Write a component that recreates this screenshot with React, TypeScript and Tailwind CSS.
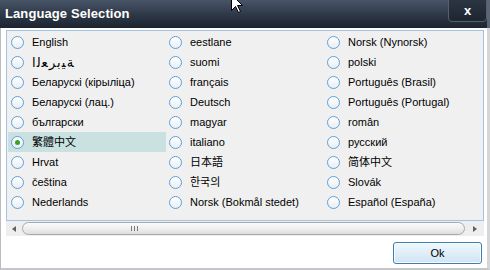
import React from "react";

const ARABIC = "ARABIC";
const arabicGlyphs = ["\uFE8D", "\uFEDF", "\uFECC", "\uFEAE", "\uFE91", "\uFEF4", "\uFE94"];

const cols: string[][] = [
  [
    "English",
    ARABIC,
    "Беларускі (кірыліца)",
    "Беларускі (лац.)",
    "български",
    "繁體中文",
    "Hrvat",
    "čeština",
    "Nederlands",
  ],
  [
    "eestlane",
    "suomi",
    "français",
    "Deutsch",
    "magyar",
    "italiano",
    "日本語",
    "한국의",
    "Norsk (Bokmål stedet)",
  ],
  [
    "Norsk (Nynorsk)",
    "polski",
    "Português (Brasil)",
    "Português (Portugal)",
    "român",
    "русский",
    "简体中文",
    "Slovák",
    "Español (España)",
  ],
];

function Radio({ checked }: { checked: boolean }) {
  return (
    <div className="w-[13px] h-[13px] rounded-full border border-[#5f9fd8] bg-gradient-to-b from-[#ffffff] to-[#e8eef5] flex items-center justify-center shrink-0">
      {checked && <div className="w-[5px] h-[5px] rounded-full bg-[#3aa02c]" />}
    </div>
  );
}

function Label({ item }: { item: string }) {
  if (item === ARABIC) {
    return (
      <span className="flex whitespace-nowrap text-[13px] leading-none gap-[1px]">
        {arabicGlyphs.map((g, i) => (
          <span key={i} className="inline-block">
            {g}
          </span>
        ))}
      </span>
    );
  }
  return <span className="whitespace-nowrap">{item}</span>;
}

export default function App() {
  return (
    <div className="relative w-[490px] h-[270px] overflow-hidden bg-white font-['Liberation_Sans','Noto_Sans_CJK_TC','DejaVu_Sans',sans-serif] text-[11px] text-black">
      {/* Title bar */}
      <div className="relative h-[28px] bg-gradient-to-b from-[#485568] via-[#2f3a49] to-[#1c2430] flex items-center pl-[5px]">
        <span className="text-white font-bold text-[13px] tracking-[0.1px]">Language Selection</span>
        <div className="absolute left-[448px] top-[-2px] w-[39px] h-[24px] rounded-b-[4px] border border-[#55606f] bg-gradient-to-b from-[#2c3643] to-[#1d2530] flex items-center justify-center">
          <span className="text-white font-bold text-[13px] leading-none">x</span>
        </div>
        <div className="absolute right-0 top-0 w-[3px] h-[28px] bg-[#5b6675]" />
      </div>

      {/* Body */}
      <div className="h-[242px] border-l border-[#b9bcc0] border-r-[3px] border-r-[#d4d6d8] border-b-2 border-b-[#c4c6c9] pl-[5px] pt-[2px] flex flex-col">
        {/* List box */}
        <div className="w-[478px] h-[191px] border border-[#9fc4e6] bg-[#f0f0f0] pt-px pl-px flex">
          {cols.map((col, ci) => (
            <div key={ci} className="w-[158px] flex flex-col">
              {col.map((item, ri) => {
                const checked = ci === 0 && ri === 5;
                return (
                  <div
                    key={ri}
                    className={`h-[20px] flex items-center pl-[3px] gap-[8px] ${checked ? "bg-[#c9e2e1]" : ""}`}
                  >
                    <Radio checked={checked} />
                    <Label item={item} />
                  </div>
                );
              })}
            </div>
          ))}
        </div>

        {/* Scrollbar */}
        <div className="w-[478px] h-[15px] bg-[#eeeeee] flex items-center">
          <div className="w-[16px] flex justify-center">
            <div className="w-0 h-0 border-y-[3px] border-y-transparent border-r-[4px] border-r-[#606060]" />
          </div>
          <div className="relative h-[13px] w-[443px] rounded-[7px] border border-[#a9a9a9] bg-gradient-to-b from-[#fbfbfb] via-[#efefef] to-[#dedede]">
            <div className="absolute left-[108px] top-[3px] flex gap-[2px]">
              <div className="w-px h-[5px] bg-[#777]" />
              <div className="w-px h-[5px] bg-[#777]" />
              <div className="w-px h-[5px] bg-[#777]" />
            </div>
          </div>
          <div className="flex-1 flex justify-center">
            <div className="w-0 h-0 border-y-[3px] border-y-transparent border-l-[4px] border-l-[#606060]" />
          </div>
        </div>

        {/* Footer */}
        <div className="flex-1 flex justify-end items-start pt-[6px] pr-[5px]">
          <button className="w-[89px] h-[22px] rounded-[3px] border border-[#3c7fb1] bg-gradient-to-b from-[#eef7fd] via-[#e0eef8] to-[#cfe4f3] shadow-[inset_0_0_0_1px_#f8fcff] text-[11px] text-black">
            Ok
          </button>
        </div>
      </div>

      {/* Mouse cursor */}
      <svg className="absolute left-[231px] top-[-6px]" width="13" height="20" viewBox="0 0 13 20">
        <path d="M0.5 0.5 L0.5 16.5 L4.5 12.5 L7.5 18.5 L9.5 17.5 L6.5 11.5 L11.5 11.5 Z" fill="white" stroke="black" strokeWidth="1" />
      </svg>
    </div>
  );
}
